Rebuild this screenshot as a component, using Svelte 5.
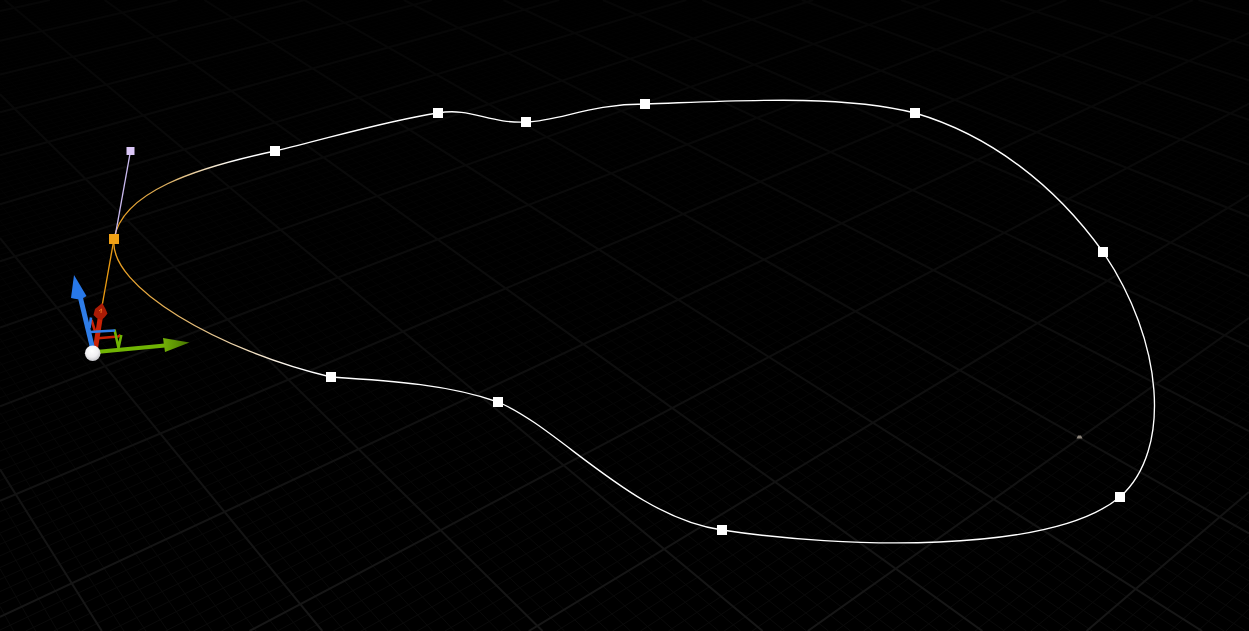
<script>
  const width = 1249;
  const height = 631;

  // Ground-plane anchors: [column, row, screen x, screen y]
  const anchors = [
    [1, 1, 161, 433], [1, 2, 225, 511], [1, 3, 301, 605],
    [2, 1, 287, 379], [2, 2, 359, 449], [2, 3, 441, 530],
    [3, 3, 564, 466], [3, 4, 663, 549],
    [4, 1, 506, 288], [4, 2, 583, 344], [4, 3, 670, 408], [4, 4, 775, 483], [4, 5, 896, 569],
    [4, 0, 438, 239], [4, -1, 380, 197], [4, -5, 192, 62],
    [5, 3, 768, 357], [5, 2, 678, 302], [5, 1, 598, 249], [5, 0, 528, 205],
    [5, 4, 873, 422], [5, 5, 994, 501], [5, 6, 1136, 590],
    [6, 4, 960, 371], [6, 5, 1078, 439], [6, 6, 1219, 512],
    [6, 2, 763, 260], [6, 1, 685, 214],
    [7, 4, 1040, 323], [7, 5, 1157, 384], [7, 3, 935, 269], [7, 1, 758, 182],
    [8, 3, 1005, 232], [8, 2, 912, 190], [9, 3, 1067, 200]
  ];

  function solve(m) {
    const n = m.length;
    for (let i = 0; i < n; i++) {
      let p = i;
      for (let r = i + 1; r < n; r++) if (Math.abs(m[r][i]) > Math.abs(m[p][i])) p = r;
      [m[i], m[p]] = [m[p], m[i]];
      for (let r = 0; r < n; r++) {
        if (r === i) continue;
        const f = m[r][i] / m[i][i];
        for (let c = i; c <= n; c++) m[r][c] -= f * m[i][c];
      }
    }
    return m.map((row, i) => row[n] / row[i]);
  }

  // Least-squares projection from screen position to ground-plane coordinates
  function fitProjection(list) {
    const rows = [];
    for (const [a, b, sx, sy] of list) {
      const x = sx / 1000;
      const y = sy / 1000;
      rows.push([x, y, 1, 0, 0, 0, -a * x, -a * y, a]);
      rows.push([0, 0, 0, x, y, 1, -b * x, -b * y, b]);
    }
    const normal = Array.from({ length: 8 }, (_, i) =>
      Array.from({ length: 9 }, (_, j) => rows.reduce((s, r) => s + r[i] * r[j], 0))
    );
    return solve(normal);
  }

  const h = fitProjection(anchors);

  function toGround(sx, sy) {
    const x = sx / 1000;
    const y = sy / 1000;
    const w = h[6] * x + h[7] * y + 1;
    return [(h[0] * x + h[1] * y + h[2]) / w, (h[3] * x + h[4] * y + h[5]) / w];
  }

  // Screen-space segment for one constant column (axis 0) or row (axis 1)
  function segment(axis, value) {
    const o = axis * 3;
    const p = h[o] - value * h[6];
    const q = h[o + 1] - value * h[7];
    const r = (h[o + 2] - value) * 1000;
    const pts = [];
    for (const x of [0, width]) {
      const y = -(p * x + r) / q;
      if (y >= 0 && y <= height) pts.push([x, y]);
    }
    for (const y of [0, height]) {
      const x = -(q * y + r) / p;
      if (x > 0 && x < width) pts.push([x, y]);
    }
    return pts.length < 2 ? '' : `M${pts[0].map((v) => v.toFixed(1))}L${pts[1].map((v) => v.toFixed(1))}`;
  }

  const corners = [[0, 0], [width, 0], [0, height], [width, height]].map(([x, y]) => toGround(x, y));
  let major = '';
  let minor = '';
  for (const axis of [0, 1]) {
    const values = corners.map((c) => c[axis]);
    const first = Math.floor(Math.min(...values) * 10);
    const last = Math.ceil(Math.max(...values) * 10);
    for (let i = first; i <= last; i++) {
      if (i % 10 === 0) major += segment(axis, i / 10);
      else minor += segment(axis, i / 10);
    }
  }

  const points = [
    [275, 151], [438, 113], [526, 122], [645, 104], [915, 113],
    [1103, 252], [1120, 497], [722, 530], [498, 402], [331, 377]
  ];
</script>

<main>
  <svg viewBox="0 0 {width} {height}" preserveAspectRatio="xMidYMid slice" role="img" aria-label="Spline viewport">
    <defs>
      <linearGradient id="majorFade" gradientUnits="userSpaceOnUse" x1="0" y1="0" x2="0" y2={height}>
        <stop offset="0" stop-color="#060606" />
        <stop offset="0.5" stop-color="#0d0d0d" />
        <stop offset="1" stop-color="#171717" />
      </linearGradient>
      <linearGradient id="minorFade" gradientUnits="userSpaceOnUse" x1="0" y1="0" x2="0" y2={height}>
        <stop offset="0" stop-color="#010101" />
        <stop offset="0.5" stop-color="#040404" />
        <stop offset="1" stop-color="#0a0a0a" />
      </linearGradient>
      <linearGradient id="upperFade" gradientUnits="userSpaceOnUse" x1="114" y1="0" x2="235" y2="0">
        <stop offset="0" stop-color="#e89c1c" />
        <stop offset="0.45" stop-color="#d9ae62" />
        <stop offset="1" stop-color="#ffffff" />
      </linearGradient>
      <linearGradient id="lowerFade" gradientUnits="userSpaceOnUse" x1="114" y1="0" x2="300" y2="0">
        <stop offset="0" stop-color="#e89c1c" />
        <stop offset="0.45" stop-color="#e2bc7c" />
        <stop offset="1" stop-color="#ffffff" />
      </linearGradient>
      <radialGradient id="ball" cx="0.45" cy="0.35" r="0.65">
        <stop offset="0" stop-color="#ffffff" />
        <stop offset="0.6" stop-color="#f0eff2" />
        <stop offset="1" stop-color="#c4c4c8" />
      </radialGradient>
      <linearGradient id="greenCone" x1="0" y1="0" x2="1" y2="0">
        <stop offset="0" stop-color="#72b008" />
        <stop offset="1" stop-color="#477600" />
      </linearGradient>
    </defs>

    <rect class="ground" {width} {height} />
    <path class="minor" d={minor} />
    <path class="major" d={major} />

    <g class="curve">
      <path d="M275 151C330 138 385 121 438 113C470 107 490 124 526 122C560 121 590 104 645 104C735 101 840 94 915 113C990 135 1055 185 1103 252C1163 340 1173 450 1120 497C1050 555 840 548 722 530C632 517 560 428 498 402C450 385 395 381 331 377" />
      <path stroke="url(#upperFade)" d="M114 239C122 192 195 168 275 151" />
      <path stroke="url(#lowerFade)" d="M114 239C108 287 220 351 331 377" />
      <path class="leave" d="M115 237L130.500 151" />
      <path class="arrive" d="M114 239L101 312" />
    </g>

    {#each points as [x, y]}
      <rect class="point" x={x - 5} y={y - 5} width="10" height="10" />
    {/each}
    <rect class="selected" x="109" y="234" width="10" height="10" />
    <rect class="tangent" x="126.500" y="147" width="8" height="8" />

    <path class="actor" d="M1076.500 438.500L1078 435.500H1081L1082.500 438.500Z" />

    <g class="gizmo">
      <path class="red line" d="M91.500 320L95 331M95 338.500L118 336.500L120.500 335" />
      <path class="red shaft" d="M95.500 348L100.500 316" />
      <path class="red cone" d="M102.300 303L105.500 309L107.500 313.500Q104 318.500 101 320Q96 318.500 93.500 315L95 309Z" />
      <path class="spark" d="M99 311L101.500 309L101 313" />
      <path class="green line" d="M114.500 329.500L118.500 348L121.300 335" />
      <path class="green shaft" d="M96 352L165 345.500" />
      <path class="cone" fill="url(#greenCone)" d="M163 338L189.500 342.500L165 352Z" />
      <path class="blue line" d="M90 332L115 330.500M89.500 328L91 317.500" />
      <path class="blue shaft" d="M92.500 348L80.500 298" />
      <path class="blue cone" d="M74 275L86.500 296Q81 301 71 298Z" />
      <circle cx="92.700" cy="353.300" r="7.800" fill="url(#ball)" />
    </g>
  </svg>
</main>

<style>
  :global(body) {
    margin: 0;
    background: #000;
  }
  main {
    height: 100vh;
    overflow: hidden;
  }
  svg {
    display: block;
    width: 100%;
    height: 100%;
  }
  .ground {
    fill: #000;
  }
  .minor,
  .major,
  .curve,
  .line,
  .shaft {
    fill: none;
  }
  .minor {
    stroke: url(#minorFade);
    stroke-width: 1;
  }
  .major {
    stroke: url(#majorFade);
    stroke-width: 2;
  }
  .curve {
    stroke: #fff;
    stroke-width: 1.35;
  }
  .leave {
    stroke: #c9b9ee;
  }
  .arrive {
    stroke: #e99a12;
  }
  .point {
    fill: #fff;
  }
  .selected {
    fill: #f0a015;
  }
  .tangent {
    fill: #dcc8f8;
  }
  .actor {
    fill: #8d857c;
  }
  .line {
    stroke-width: 2.6;
  }
  .shaft {
    stroke-width: 5;
  }
  .red {
    stroke: #c82206;
  }
  .green {
    stroke: #70b404;
  }
  .green.shaft {
    stroke-width: 4;
  }
  .blue {
    stroke: #2f7de8;
  }
  .cone,
  .red.cone,
  .blue.cone {
    stroke: none;
  }
  .red.cone {
    fill: #a91b05;
  }
  .blue.cone {
    fill: #2878e8;
  }
  .spark {
    fill: none;
    stroke: #f06a20;
    stroke-width: 1;
  }
</style>
